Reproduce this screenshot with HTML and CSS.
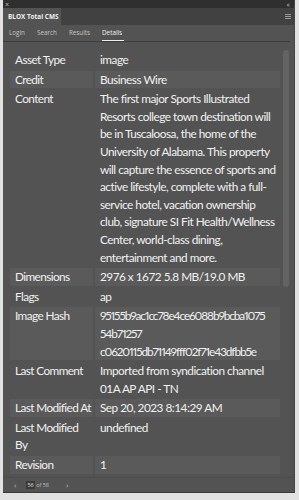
FILE: index.html
```html
<!DOCTYPE html>
<html>
<head>
<meta charset="utf-8">
<link rel="stylesheet" href="styles.css">
</head>
<body>
<div class="panel">
  <div class="topstrip">
    <span class="close">×</span>
    <span class="collapse">«</span>
  </div>
  <div class="header">
    <div class="ptab">BLOX Total CMS</div>
    <div class="menu"><span></span><span></span><span></span></div>
  </div>
  <div class="tabs">
    <span class="tab">Login</span>
    <span class="tab">Search</span>
    <span class="tab">Results</span>
    <span class="tab active">Details</span>
  </div>
  <div class="main">
    <table class="details">
      <tr><td class="k">Asset Type</td><td class="v">image</td></tr>
      <tr class="alt"><td class="k">Credit</td><td class="v">Business Wire</td></tr>
      <tr><td class="k">Content</td><td class="v">The first major Sports Illustrated Resorts college town destination will be in Tuscaloosa, the home of the University of Alabama. This property will capture the essence of sports and active lifestyle, complete with a full-service hotel, vacation ownership club, signature SI Fit Health/Wellness Center, world-class dining, entertainment and more.</td></tr>
      <tr class="alt"><td class="k">Dimensions</td><td class="v">2976 x 1672 5.8 MB/19.0 MB</td></tr>
      <tr><td class="k">Flags</td><td class="v">ap</td></tr>
      <tr class="alt"><td class="k">Image Hash</td><td class="v hash">95155b9ac1cc78e4ce6088b9bcba1075<wbr>54b71257 c0620115db71149fff02f71e43dfbb5e</td></tr>
      <tr><td class="k">Last Comment</td><td class="v">Imported from syndication channel 01A AP API - TN</td></tr>
      <tr class="alt"><td class="k">Last Modified At</td><td class="v">Sep 20, 2023 8:14:29 AM</td></tr>
      <tr><td class="k">Last Modified By</td><td class="v">undefined</td></tr>
      <tr class="alt"><td class="k">Revision</td><td class="v">1</td></tr>
    </table>
    <div class="scroll"><div class="thumb"></div></div>
  </div>
  <div class="footer">
    <span class="arrow">‹</span>
    <span class="pager"><span class="cur">56</span> of 58</span>
    <span class="arrow">›</span>
  </div>
</div>
</body>
</html>
```
FILE: styles.css
```css
html, body {
  margin: 0;
  padding: 0;
}
body {
  background: #e2e2e2;
  width: 299px;
  height: 500px;
  overflow: hidden;
  font-family: "Lato", "Open Sans", sans-serif;
}
.panel {
  margin-left: 3px;
  width: 292px;
  height: 493px;
  background: #535353;
  display: flex;
  flex-direction: column;
  border-right: 1px solid #454545;
  border-bottom: 1px solid #3a3a3a;
  box-sizing: border-box;
  overflow: hidden;
}
.topstrip {
  height: 8px;
  flex: none;
  background: #2f2f2f;
  display: flex;
  justify-content: space-between;
  align-items: center;
  padding: 0 4px 0 2px;
  color: #b8b8b8;
  font-size: 7px;
  line-height: 8px;
}
.collapse {
  font-size: 8px;
}
.header {
  height: 17px;
  flex: none;
  background: #414141;
  display: flex;
  justify-content: space-between;
  align-items: stretch;
}
.ptab {
  background: #535353;
  color: #f0f0f0;
  font-family: "Open Sans", sans-serif;
  font-weight: 700;
  font-size: 6.4px;
  line-height: 17px;
  padding: 0 0 0 5px;
  width: 53px;
  white-space: nowrap;
}
.menu {
  display: flex;
  flex-direction: column;
  gap: 1px;
  padding: 6px 3px 0 0;
}
.menu span {
  display: block;
  width: 6px;
  height: 1px;
  background: #9a9a9a;
}
.tabs {
  height: 16px;
  flex: none;
  display: flex;
  padding-left: 6px;
  border-bottom: 1px solid #3b3b3b;
  margin-right: 4px;
  font-family: "Open Sans", sans-serif;
  font-size: 6.3px;
  color: #c4c4c4;
  white-space: nowrap;
}
.tab {
  line-height: 15px;
  margin-right: 12px;
  border-bottom: 1px solid transparent;
}
.tab.active {
  color: #f2f2f2;
  border-bottom: 1px solid #f0f0f0;
  padding-right: 2px;
}
.main {
  flex: 1;
  display: flex;
  align-items: flex-start;
  padding-top: 7px;
  min-height: 0;
  overflow: hidden;
}
.details {
  margin-left: 5px;
  width: 274px;
  border-collapse: separate;
  border-spacing: 2px;
  color: #f1f1f1;
  font-size: 11.8px;
  letter-spacing: -0.5px;
  line-height: 17.6px;
  table-layout: fixed;
  flex: none;
}
.details td {
  padding: 0;
  vertical-align: top;
}
.details .k {
  width: 76.7px;
  padding-left: 5px;
  padding-right: 1.3px;
  letter-spacing: -0.6px;
}
.details .v {
  padding-left: 5px;
  padding-right: 4px;
}
.details tr.alt td {
  background: #5a5a5a;
}
.hash {
  overflow-wrap: anywhere;
  letter-spacing: -1.1px;
  font-variant-numeric: proportional-nums;
}
.scroll {
  width: 6px;
  margin-left: 1px;
  margin-top: 1px;
  flex: none;
}
.thumb {
  height: 237px;
  background: #636363;
  border-radius: 3px;
}
.footer {
  height: 14px;
  flex: none;
  display: flex;
  align-items: center;
  gap: 10px;
  padding-left: 11px;
  font-family: "Open Sans", sans-serif;
  font-size: 5.5px;
  color: #bdbdbd;
  border-top: 1px solid #4c4c4c;
}
.arrow {
  font-size: 8px;
  line-height: 8px;
}
.cur {
  background: #3a3a3a;
  color: #e0e0e0;
  padding: 0 1px;
}
.pager {
  margin-right: 7px;
}
```
